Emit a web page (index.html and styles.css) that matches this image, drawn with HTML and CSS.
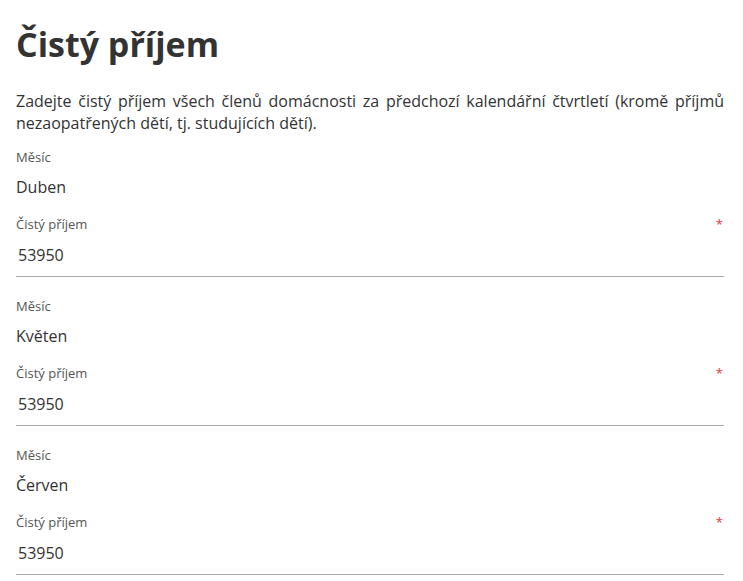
FILE: index.html
```html
<!DOCTYPE html>
<html lang="cs">
<head>
    <meta charset="UTF-8">
    <title>Čistý příjem</title>
    <link rel="stylesheet" href="styles.css">
</head>
<body>
    <div class="page">
        <h1>Čistý příjem</h1>
        <p class="intro">Zadejte čistý příjem všech členů domácnosti za předchozí kalendářní čtvrtletí (kromě příjmů nezaopatřených dětí, tj. studujících dětí).</p>

        <div class="month">
            <div class="label">Měsíc</div>
            <div class="value">Duben</div>
            <div class="label label-required">
                <span>Čistý příjem</span>
                <span class="required">*</span>
            </div>
            <input class="income" type="text" value="53950">
        </div>

        <div class="month">
            <div class="label">Měsíc</div>
            <div class="value">Květen</div>
            <div class="label label-required">
                <span>Čistý příjem</span>
                <span class="required">*</span>
            </div>
            <input class="income" type="text" value="53950">
        </div>

        <div class="month">
            <div class="label">Měsíc</div>
            <div class="value">Červen</div>
            <div class="label label-required">
                <span>Čistý příjem</span>
                <span class="required">*</span>
            </div>
            <input class="income" type="text" value="53950">
        </div>
    </div>
</body>
</html>
```

FILE: styles.css
```css
* {
    margin: 0;
    padding: 0;
    box-sizing: border-box;
}

body {
    font-family: "Open Sans", "Noto Sans", sans-serif;
    color: #333;
    background: #fff;
}

.page {
    padding: 22px 19px 0 16px;
}

h1 {
    font-size: 34px;
    line-height: 44px;
    font-weight: 700;
    color: #333;
}

.intro {
    margin-top: 24px;
    font-size: 16px;
    line-height: 22px;
    text-align: justify;
    color: #333;
}

.month {
    margin-top: 13px;
    display: flex;
    flex-direction: column;
}

.month + .month {
    margin-top: 19px;
}

.label {
    font-size: 13px;
    line-height: 20px;
    color: #555;
}

.value {
    margin-top: 8px;
    font-size: 16px;
    line-height: 24px;
    color: #333;
}

.label-required {
    margin-top: 15px;
    display: flex;
    justify-content: space-between;
}

.required {
    color: #e53935;
    font-size: 13px;
    padding-right: 1px;
}

.income {
    margin-top: 2px;
    width: 100%;
    border: none;
    border-bottom: 1px solid #aaa;
    padding: 8px 2px 10px;
    font-family: inherit;
    font-size: 16px;
    line-height: 22px;
    color: #333;
    outline: none;
    background: transparent;
}
```
